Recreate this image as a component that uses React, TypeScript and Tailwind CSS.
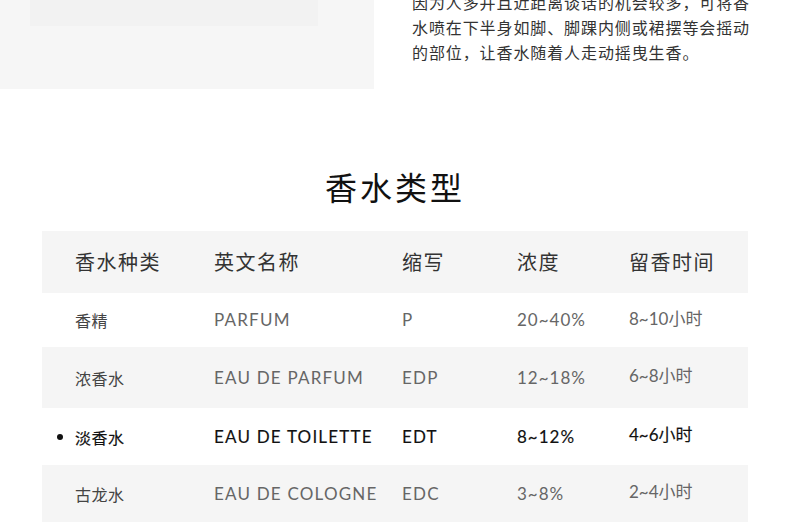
const rows = [
  { type: '香精', en: 'PARFUM', abbr: 'P', conc: '20~40%', time: '8~10小时', gray: false, h: 'h-[54px]' },
  { type: '浓香水', en: 'EAU DE PARFUM', abbr: 'EDP', conc: '12~18%', time: '6~8小时', gray: true, h: 'h-[61px]' },
  { type: '淡香水', en: 'EAU DE TOILETTE', abbr: 'EDT', conc: '8~12%', time: '4~6小时', gray: false, h: 'h-[57px]', active: true },
  { type: '古龙水', en: 'EAU DE COLOGNE', abbr: 'EDC', conc: '3~8%', time: '2~4小时', gray: true, h: 'h-[57px]' },
];

const cjk = "font-['Noto_Sans_CJK_SC',sans-serif]";
const latin = "font-['Lato','Noto_Sans_CJK_SC',sans-serif]";

export default function App() {
  return (
    <div className="w-[790px] h-[522px] overflow-hidden bg-white text-[#333]">
      {/* top: image placeholder + tip text */}
      <div className="flex h-[89px]">
        <div className="w-[374px] h-[89px] bg-[#f6f6f6] pl-[30px]">
          <div className="w-[288px] h-[26px] bg-[#f2f2f2]" />
        </div>
        <p className={`${cjk} ml-[38px] -mt-[10px] w-[350px] text-[16px] leading-[25px] tracking-[0.9px] text-[#333]`}>
          因为人多并且近距离谈话的机会较多，可将香水喷在下半身如脚、脚踝内侧或裙摆等会摇动的部位，让香水随着人走动摇曳生香。
        </p>
      </div>

      <h2 className={`${cjk} pt-[75px] mb-[23px] text-center text-[32px] leading-[44px] tracking-[3px] text-[#111]`}>
        香水类型
      </h2>

      <div className="mx-[42px] w-[706px]">
        <div className={`${cjk} grid grid-cols-[139px_188px_115px_112px_1fr] items-center h-[62px] pl-[33px] bg-[#f5f5f5] text-[20px] tracking-[1.5px] text-[#333]`}>
          <span>香水种类</span>
          <span>英文名称</span>
          <span>缩写</span>
          <span>浓度</span>
          <span>留香时间</span>
        </div>
        {rows.map((r) => (
          <div
            key={r.abbr}
            className={`grid grid-cols-[139px_188px_115px_112px_1fr] items-center pl-[33px] ${r.h} ${r.gray ? 'bg-[#f5f5f5]' : 'bg-white'} ${r.active ? 'text-[#111] [-webkit-text-stroke:0.15px_#111]' : 'text-[#666]'}`}
          >
            <span className={`${cjk} relative text-[16px] tracking-[0.5px] ${r.active ? 'text-[#111]' : 'text-[#444]'}`}>
              {r.active && <span className="absolute -left-[18px] top-1/2 -translate-y-1/2 w-[6px] h-[6px] rounded-full bg-[#111]" />}
              {r.type}
            </span>
            <span className={`${latin} text-[17px] tracking-[1.2px] font-normal`}>{r.en}</span>
            <span className={`${latin} text-[17px] tracking-[1.2px] font-normal`}>{r.abbr}</span>
            <span className={`${latin} text-[17px] tracking-[1px] font-normal`}>{r.conc}</span>
            <span className={`${latin} -mt-[3px] text-[17px] font-normal`}>{r.time}</span>
          </div>
        ))}
      </div>
    </div>
  );
}
